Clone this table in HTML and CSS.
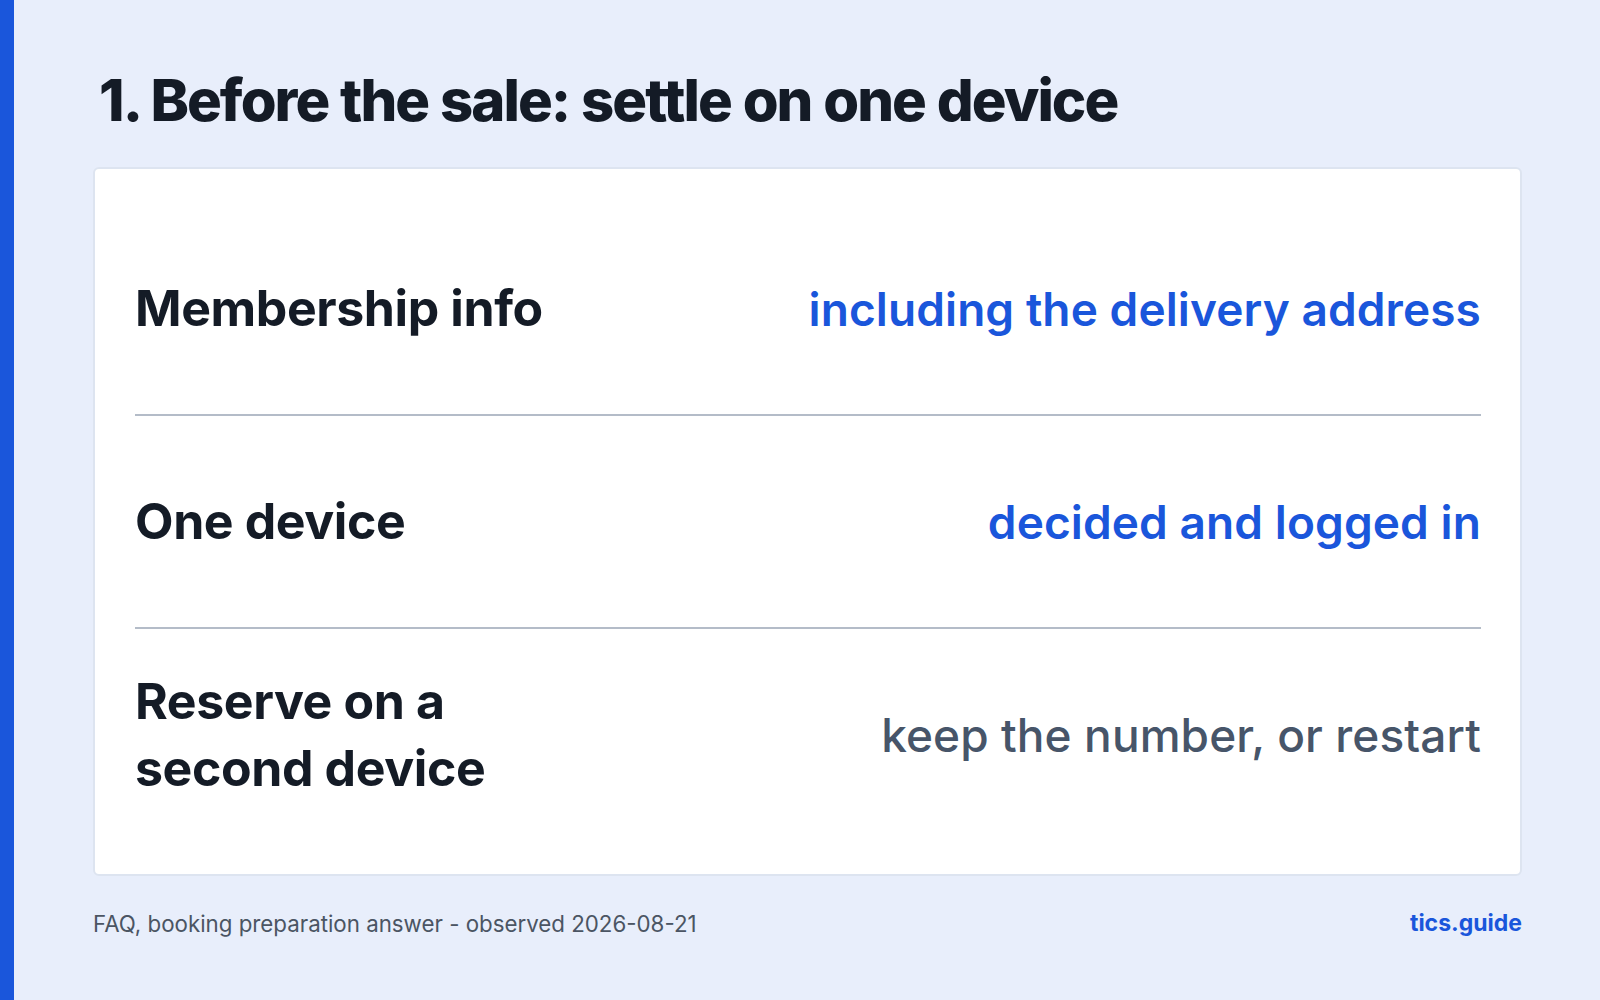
FILE: index.html
```html
<!DOCTYPE html>
<html lang="en">

<head>
    <meta charset="UTF-8">
    <meta name="viewport" content="width=device-width, initial-scale=1.0">
    <title>Before the sale</title>
    <link rel="stylesheet" href="styles.css">
</head>

<body>
    <div class="page">
        <h1 class="title">1. Before the sale: settle on one device</h1>
        <div class="card">
            <div class="row">
                <div class="label">Membership info</div>
                <div class="value blue">including the delivery address</div>
            </div>
            <div class="row">
                <div class="label">One device</div>
                <div class="value blue">decided and logged in</div>
            </div>
            <div class="row">
                <div class="label">Reserve on a<br>second device</div>
                <div class="value gray">keep the number, or restart</div>
            </div>
        </div>
        <div class="footer">
            <span class="source">FAQ, booking preparation answer - observed 2026-08-21</span>
            <span class="brand">tics.guide</span>
        </div>
    </div>
</body>

</html>
```

FILE: styles.css
```css
* {
    margin: 0;
    padding: 0;
    box-sizing: border-box;
}

body {
    background: #e8eefb;
    font-family: Inter, "Noto Sans", sans-serif;
    color: #141b26;
}

.page {
    height: 1000px;
    border-left: 14px solid #1a56db;
    padding: 64px 78px 0 79px;
    display: flex;
    flex-direction: column;
}

.title {
    font-size: 58px;
    font-weight: 800;
    letter-spacing: -1.95px;
    word-spacing: 1px;
    line-height: 72px;
    padding-left: 6px;
    margin-bottom: 31px;
}

.card {
    height: 709px;
    background: #fff;
    border: 2px solid #dde4f0;
    border-radius: 6px;
    padding: 34px 39px 34px 40px;
    display: flex;
    flex-direction: column;
}

.row {
    flex: 1;
    display: flex;
    align-items: center;
    justify-content: space-between;
    border-bottom: 2px solid #b4bcc8;
}

.row:last-child {
    border-bottom: none;
}

.label {
    font-size: 50px;
    font-weight: 700;
    line-height: 67px;
    letter-spacing: -0.4px;
}

.value {
    font-size: 46px;
    font-weight: 600;
    letter-spacing: 0.1px;
    text-align: right;
}

.blue {
    color: #1a56db;
}

.gray {
    color: #475569;
    font-weight: 500;
}

.footer {
    display: flex;
    justify-content: space-between;
    align-items: center;
    padding-top: 33px;
}

.source {
    font-size: 22.3px;
    color: #4b5563;
}

.brand {
    font-size: 23px;
    font-weight: 700;
    color: #1a56db;
}
```
